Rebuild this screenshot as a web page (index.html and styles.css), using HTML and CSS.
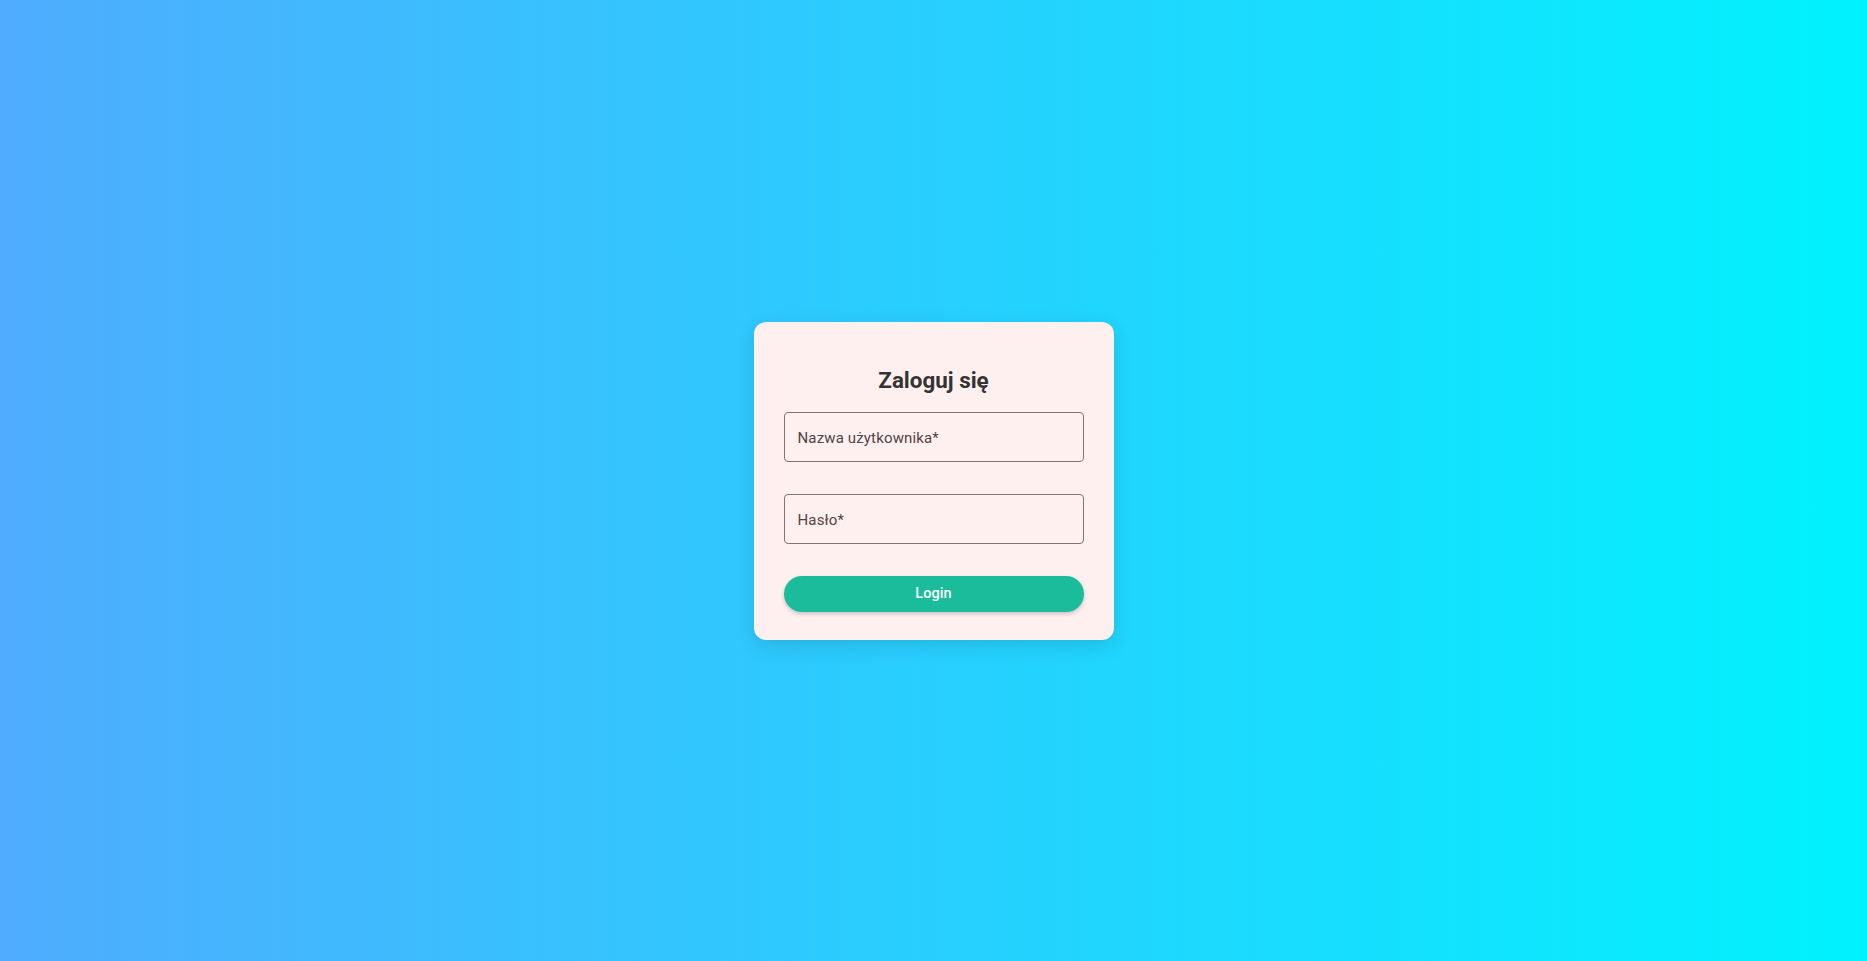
FILE: index.html
```html
<!DOCTYPE html>
<html lang="pl">
<head>
<meta charset="utf-8">
<title>Zaloguj się</title>
<link rel="stylesheet" href="styles.css">
</head>
<body>
<main class="page">
  <form class="card">
    <h2 class="title">Zaloguj się</h2>
    <label class="field">
      <span class="field-label">Nazwa użytkownika*</span>
    </label>
    <label class="field">
      <span class="field-label">Hasło*</span>
    </label>
    <button type="button" class="login-btn">Login</button>
  </form>
</main>
</body>
</html>
```
FILE: styles.css
```css
* { box-sizing: border-box; }
html, body {
  margin: 0;
  height: 100%;
}
body {
  font-family: Roboto, "Liberation Sans", sans-serif;
  background: linear-gradient(to right, #4facfe 0%, #00f2fe 100%);
}
.page {
  height: 100vh;
  display: flex;
  align-items: center;
  justify-content: center;
}
.card {
  width: 360px;
  padding: 30px 30px 28px;
  background: #fff0f0;
  border-radius: 12px;
  box-shadow: 0 6px 20px rgba(0, 0, 0, 0.12);
  display: flex;
  flex-direction: column;
}
.title {
  margin: 14px 0 18px;
  text-align: center;
  font-size: 22.4px;
  font-weight: 700;
  color: #333333;
  line-height: 28px;
}
.field {
  height: 50px;
  border: 1px solid #857373;
  border-radius: 4px;
  display: flex;
  align-items: center;
  padding: 0 13px;
  margin-bottom: 32px;
}
.field-label {
  font-size: 15px;
  letter-spacing: 0.15px;
  color: #524343;
  line-height: 24px;
  padding-top: 2px;
}
.login-btn {
  height: 36px;
  border: none;
  border-radius: 18px;
  background: #1abc9c;
  color: #ffffff;
  font-family: Roboto, "Liberation Sans", sans-serif;
  font-size: 14.5px;
  font-weight: 500;
  letter-spacing: 0.1px;
  box-shadow: 0 2px 4px rgba(0, 0, 0, 0.2);
  padding: 0;
}
```
